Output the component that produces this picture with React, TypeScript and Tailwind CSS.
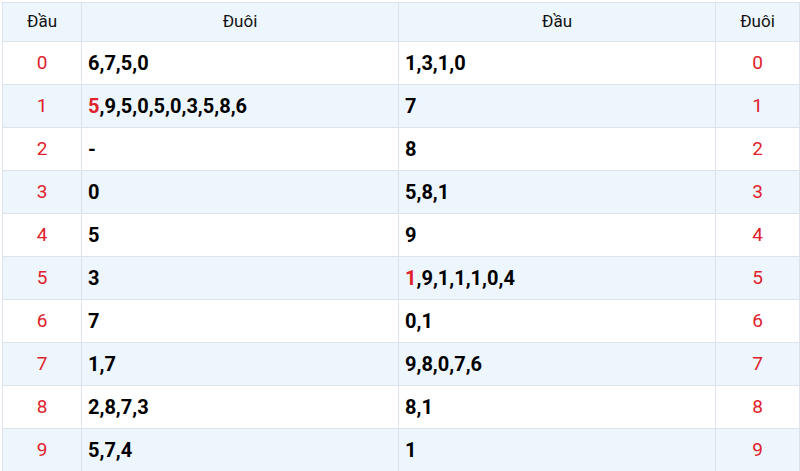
import React from "react";

type Row = { d: number; tail: React.ReactNode; head: React.ReactNode };

const R = ({ c }: { c: string }) => <span className="text-[#e0222b]">{c}</span>;

const rows: Row[] = [
  { d: 0, tail: "6,7,5,0", head: "1,3,1,0" },
  { d: 1, tail: <><R c="5" />,9,5,0,5,0,3,5,8,6</>, head: "7" },
  { d: 2, tail: "-", head: "8" },
  { d: 3, tail: "0", head: "5,8,1" },
  { d: 4, tail: "5", head: "9" },
  { d: 5, tail: "3", head: <><R c="1" />,9,1,1,1,0,4</> },
  { d: 6, tail: "7", head: "0,1" },
  { d: 7, tail: "1,7", head: "9,8,0,7,6" },
  { d: 8, tail: "2,8,7,3", head: "8,1" },
  { d: 9, tail: "5,7,4", head: "1" },
];

export default function App() {
  return (
    <div
      className="w-[800px] h-[471px] overflow-hidden bg-white pl-[2px] pt-[2px]"
      style={{ fontFamily: "Roboto, 'Noto Sans', sans-serif" }}
    >
      <table className="border-collapse table-fixed w-[797px]">
        <colgroup>
          <col className="w-[79px]" />
          <col className="w-[317px]" />
          <col className="w-[317px]" />
          <col className="w-[84px]" />
        </colgroup>
        <thead>
          <tr className="h-[39px] bg-[#eef6fd] text-[17px] text-[#111]">
            <th className="border border-[#dde3ea] font-normal text-center p-0">Đầu</th>
            <th className="border border-[#dde3ea] font-normal text-center p-0">Đuôi</th>
            <th className="border border-[#dde3ea] font-normal text-center p-0">Đầu</th>
            <th className="border border-[#dde3ea] font-normal text-center p-0">Đuôi</th>
          </tr>
        </thead>
        <tbody>
          {rows.map((r, i) => (
            <tr key={r.d} className={`h-[43px] ${i % 2 === 1 ? "bg-[#eef6fd]" : "bg-white"}`}>
              <td className="border border-[#dde3ea] text-center text-[19px] text-[#e0222b] p-0">{r.d}</td>
              <td className="border border-[#dde3ea] pl-[6px] text-[20px] font-bold text-black">{r.tail}</td>
              <td className="border border-[#dde3ea] pl-[6px] text-[20px] font-bold text-black">{r.head}</td>
              <td className="border border-[#dde3ea] text-center text-[19px] text-[#e0222b] p-0">{r.d}</td>
            </tr>
          ))}
        </tbody>
      </table>
    </div>
  );
}
